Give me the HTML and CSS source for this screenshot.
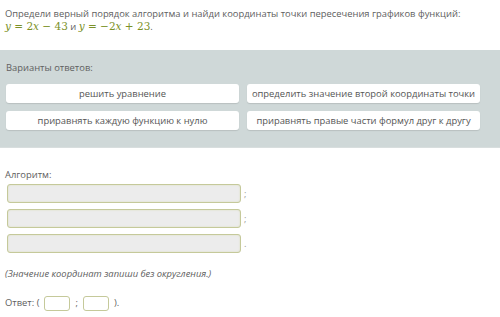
FILE: index.html
```
<!DOCTYPE html>
<html>
	<head>
		<meta charset="utf-8">
		<title>Алгоритм</title>
		<link rel="stylesheet" href="styles.css">
	</head>
	<body>
		<div class="task">
			<p class="question">Определи верный порядок алгоритма и найди координаты точки пересечения графиков функций:</p>
			<p class="question formula"><span class="math"><i>y</i> = 2<i>x</i> − 43</span> и <span class="math"><i>y</i> = −2<i>x</i> + 23</span>.</p>
		</div>

		<div class="variants">
			<div class="label">Варианты ответов:</div>
			<div class="options">
				<div class="option">решить уравнение</div>
				<div class="option">определить значение второй координаты точки</div>
				<div class="option">приравнять каждую функцию к нулю</div>
				<div class="option">приравнять правые части формул друг к другу</div>
			</div>
		</div>

		<div class="answer">
			<div class="label">Алгоритм:</div>
			<div class="slots">
				<div class="slot-row"><div class="slot"></div><span>;</span></div>
				<div class="slot-row"><div class="slot"></div><span>;</span></div>
				<div class="slot-row"><div class="slot"></div><span>.</span></div>
			</div>
			<p class="note">(Значение координат запиши без округления.)</p>
			<div class="result">Ответ: (<span class="box"></span>;<span class="box"></span>).</div>
		</div>
	</body>
</html>
```

FILE: styles.css
```
body {
	margin: 0;
	padding: 0;
	background-color: #ffffff;
	font-family: "Open Sans", "Noto Sans", sans-serif;
	font-size: 9.4px;
	color: #606060;
}

.task {
	padding: 7px 5px 0 5px;
	box-sizing: border-box;
	height: 50px;
}

.question {
	margin: 0;
	line-height: 13px;
}

.math {
	font-family: "DejaVu Serif", "Liberation Serif", serif;
	font-size: 10.5px;
	color: #7b9127;
}

.variants {
	background-color: #cfd8d8;
	height: 98px;
	padding: 0 6px;
	box-sizing: border-box;
	border-bottom: 1px solid #d8dede;
}

.variants .label {
	padding-top: 11px;
	line-height: 14px;
	height: 23px;
}

.options {
	display: grid;
	grid-template-columns: 233px 233px;
	column-gap: 8px;
	row-gap: 8px;
}

.option {
	background-color: #ffffff;
	border-radius: 3px;
	height: 19px;
	line-height: 19px;
	text-align: center;
	box-shadow: 0 1px 1px #b8c0c0;
	color: #555555;
}

.answer {
	padding: 0 5px;
}

.answer .label {
	padding-top: 20px;
	line-height: 13px;
}

.slots {
	padding-left: 2px;
	margin-top: 0;
}

.slot-row {
	display: flex;
	align-items: center;
	height: 25px;
}

.slot {
	width: 232px;
	height: 17px;
	background-color: #ececec;
	border: 1px solid #c5c99a;
	border-radius: 3px;
	box-shadow: inset 0 0 2px #d8dbb8;
	margin-right: 3px;
}

.slot-row span {
	color: #999999;
}

.note {
	margin: 11px 0 0 0;
	font-style: italic;
	line-height: 14px;
}

.result {
	margin-top: 15px;
	line-height: 14px;
}

.box {
	display: inline-block;
	vertical-align: middle;
	width: 24px;
	height: 13px;
	margin: 0 5px;
	border: 1px solid #c5c99a;
	border-radius: 3px;
	background-color: #ffffff;
}
```
